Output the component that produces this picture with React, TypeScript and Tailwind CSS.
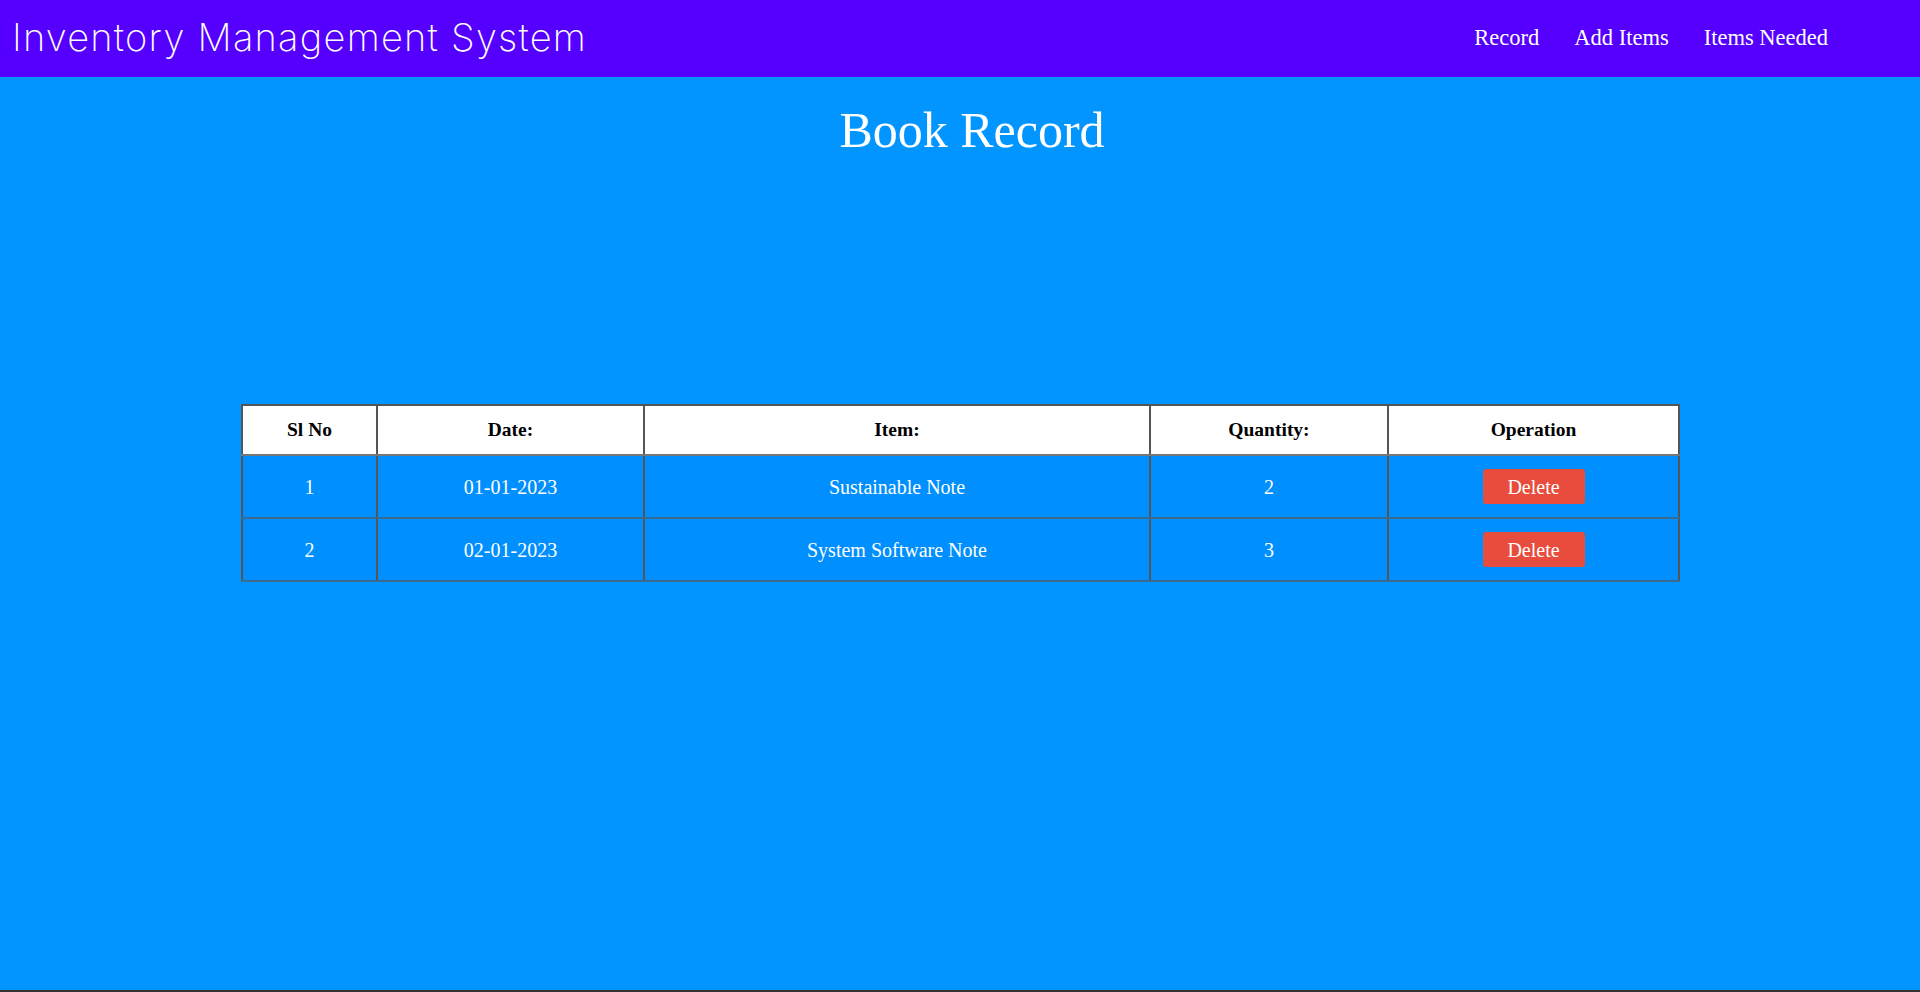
import React from "react";

const rows = [
  { sl: 1, date: "01-01-2023", item: "Sustainable Note", qty: 2 },
  { sl: 2, date: "02-01-2023", item: "System Software Note", qty: 3 },
];

export default function App() {
  const serif = { fontFamily: '"Liberation Serif", "Times New Roman", serif' };
  return (
    <div className="w-full h-[992px] flex flex-col bg-[#0095ff]" style={serif}>
      <header className="h-[77px] shrink-0 bg-[#5500ff] flex items-center justify-between pl-[12px] pr-[92px]">
        <div
          className="text-white text-[38px] font-extralight leading-none tracking-[1.25px] pb-[4px]"
          style={{ fontFamily: 'Inter, "Open Sans", sans-serif' }}
        >
          Inventory Management System
        </div>
        <nav className="flex gap-[35px] text-white text-[22.5px] pb-[2px]">
          <a>Record</a>
          <a>Add Items</a>
          <a>Items Needed</a>
        </nav>
      </header>
      <main className="flex-1 flex flex-col border-b-2 border-[#333]">
        <h1 className="text-white text-[50px] leading-[56px] text-center pl-[24px] mt-[25px]">Book Record</h1>
        <div className="mt-[246px] pl-[241px]">
          <table className="border-collapse border-2 border-[#6d6d6d] w-[1439px] text-center">
            <thead>
              <tr className="bg-white text-black h-[50px] text-[19.5px] font-bold">
                <th className="w-[135px] border-2 border-[#555] border-b-[#777]">Sl No</th>
                <th className="w-[267px] border-2 border-[#555] border-b-[#777]">Date:</th>
                <th className="w-[506px] border-2 border-[#555] border-b-[#777]">Item:</th>
                <th className="w-[238px] border-2 border-[#555] border-b-[#777]">Quantity:</th>
                <th className="border-2 border-[#555] border-b-[#777]">Operation</th>
              </tr>
            </thead>
            <tbody>
              {rows.map((r) => (
                <tr key={r.sl} className="bg-[#008fff] text-white text-[20px] h-[63px]">
                  <td className="border-2 border-[#555] border-b-[#3d6b8f]">{r.sl}</td>
                  <td className="border-2 border-[#555] border-b-[#3d6b8f]">{r.date}</td>
                  <td className="border-2 border-[#555] border-b-[#3d6b8f]">{r.item}</td>
                  <td className="border-2 border-[#555] border-b-[#3d6b8f]">{r.qty}</td>
                  <td className="border-2 border-[#555] border-b-[#3d6b8f]">
                    <button className="bg-[#e74c3c] text-white text-[20px] w-[102px] h-[35px] rounded-[3px] leading-none">
                      Delete
                    </button>
                  </td>
                </tr>
              ))}
            </tbody>
          </table>
        </div>
      </main>
    </div>
  );
}
